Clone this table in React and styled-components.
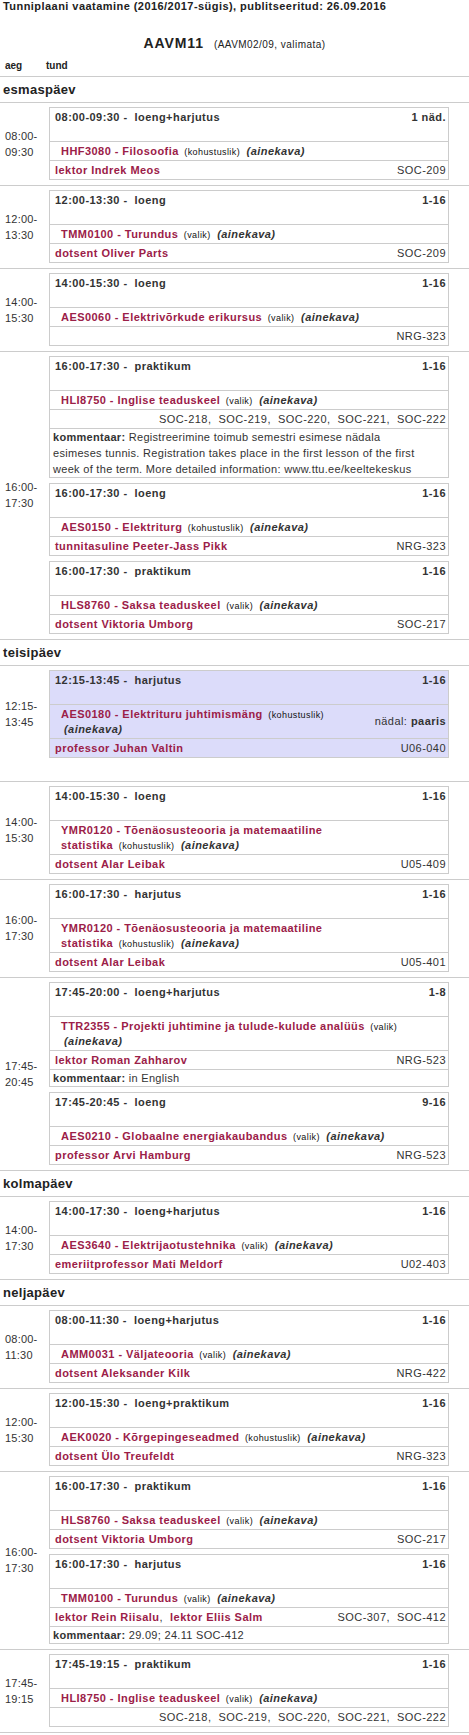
import React from "react";
import styled, { createGlobalStyle } from "styled-components";

const GlobalStyle = createGlobalStyle`
  * { box-sizing: border-box; }
  body {
    margin: 0;
    background: #ffffff;
    color: #222222;
    font-family: "Liberation Sans", Arial, Helvetica, sans-serif;
  }
`;

const LINE = "#cccccc";
const RED = "#9b2048";

const Page = styled.div`
  width: 469px;
  font-size: 11px;
  letter-spacing: 0.45px;
`;

const Title = styled.div`
  padding-left: 3px;
  font-weight: bold;
  line-height: 13px;
  color: #222;
`;

const Group = styled.div`
  margin-top: 22px;
  text-align: center;
  line-height: 17px;
`;

const GroupName = styled.span`
  font-size: 14px;
  font-weight: bold;
  letter-spacing: 0.9px;
  color: #222;
`;

const GroupNote = styled.span`
  margin-left: 10px;
  font-size: 10px;
  color: #222;
`;

const Heads = styled.div`
  display: flex;
  margin-top: 7px;
  padding-bottom: 4px;
  font-size: 10px;
  font-weight: bold;
  line-height: 12px;
  letter-spacing: 0;
`;

const Head = styled.span`
  width: ${(p) => p.$w}px;
  padding-left: 5px;
`;

const DayTitle = styled.div`
  border-top: 1px solid ${LINE};
  height: 26px;
  padding-left: 3px;
  font-size: 13px;
  font-weight: bold;
  letter-spacing: 0.3px;
  line-height: 25px;
  color: #222;
`;

const Slot = styled.div`
  display: grid;
  grid-template-columns: 49px 400px;
  border-top: 1px solid ${LINE};
  padding: 4px 0 ${(p) => p.$tail}px;
  &:last-child {
    border-bottom: 1px solid ${LINE};
  }
`;

const Time = styled.div`
  align-self: center;
  padding-left: 5px;
  line-height: 16px;
  letter-spacing: 0.2px;
  color: #333;
`;

const Boxes = styled.div`
  display: flex;
  flex-direction: column;
  gap: 5px;
`;

const Box = styled.div`
  border: 1px solid ${LINE};
  background: ${(p) => (p.$hl ? "#dcdcfa" : "#ffffff")};
`;

const Row = styled.div`
  display: flex;
  justify-content: space-between;
  align-items: center;
  gap: 6px;
  padding: 1.5px 2px 1.5px ${(p) => p.$indent || 5}px;
  line-height: 15px;
  border-top: 1px solid ${LINE};
  &:first-child {
    border-top: 0;
  }
`;

const HeadRow = styled(Row)`
  align-items: flex-start;
  min-height: 33px;
  font-weight: bold;
  color: #333;
  white-space: pre;
`;

const Red = styled.span`
  color: ${RED};
  font-weight: bold;
`;

const Kind = styled.span`
  margin-left: 2px;
  font-size: 9px;
  line-height: 1;
  letter-spacing: 0.4px;
  color: #111;
`;

const Plan = styled.span`
  margin-left: 3px;
  font-weight: bold;
  font-style: italic;
  color: #333;
`;

const Right = styled.span`
  flex-shrink: 0;
  white-space: nowrap;
  color: #333;
`;

const Bold = styled.b`
  color: #333;
`;

const Sep = styled.span`
  color: #333;
`;

const Comment = styled.div`
  border-top: 1px solid ${LINE};
  padding: 0 2px 0 3px;
  line-height: 16px;
  letter-spacing: 0.3px;
  white-space: nowrap;
  color: #333;
`;

const HLI = {
  time: "16:00-17:30",
  type: "praktikum",
  weeks: "1-16",
  code: ["HLI8750 - Inglise teaduskeel"],
  kind: "valik",
  teachers: [],
  rooms: ["SOC-218", "SOC-219", "SOC-220", "SOC-221", "SOC-222"],
};

const HLS = {
  time: "16:00-17:30",
  type: "praktikum",
  weeks: "1-16",
  code: ["HLS8760 - Saksa teaduskeel"],
  kind: "valik",
  teachers: ["dotsent Viktoria Umborg"],
  rooms: ["SOC-217"],
};

const YMR = ["YMR0120 - Tõenäosusteooria ja matemaatiline", "statistika"];

const days = [
  {
    name: "esmaspäev",
    slots: [
      {
        from: "08:00",
        to: "09:30",
        items: [
          {
            time: "08:00-09:30",
            type: "loeng+harjutus",
            weeks: "1 näd.",
            code: ["HHF3080 - Filosoofia"],
            kind: "kohustuslik",
            teachers: ["lektor Indrek Meos"],
            rooms: ["SOC-209"],
          },
        ],
      },
      {
        from: "12:00",
        to: "13:30",
        items: [
          {
            time: "12:00-13:30",
            type: "loeng",
            weeks: "1-16",
            code: ["TMM0100 - Turundus"],
            kind: "valik",
            teachers: ["dotsent Oliver Parts"],
            rooms: ["SOC-209"],
          },
        ],
      },
      {
        from: "14:00",
        to: "15:30",
        items: [
          {
            time: "14:00-15:30",
            type: "loeng",
            weeks: "1-16",
            code: ["AES0060 - Elektrivõrkude erikursus"],
            kind: "valik",
            teachers: [],
            rooms: ["NRG-323"],
          },
        ],
      },
      {
        from: "16:00",
        to: "17:30",
        items: [
          {
            ...HLI,
            comment: [
              "Registreerimine toimub semestri esimese nädala",
              "esimeses tunnis. Registration takes place in the first lesson of the first",
              "week of the term. More detailed information: www.ttu.ee/keeltekeskus",
            ],
          },
          {
            time: "16:00-17:30",
            type: "loeng",
            weeks: "1-16",
            code: ["AES0150 - Elektriturg"],
            kind: "kohustuslik",
            teachers: ["tunnitasuline Peeter-Jass Pikk"],
            rooms: ["NRG-323"],
          },
          HLS,
        ],
      },
    ],
  },
  {
    name: "teisipäev",
    slots: [
      {
        from: "12:15",
        to: "13:45",
        tail: 23,
        items: [
          {
            time: "12:15-13:45",
            type: "harjutus",
            weeks: "1-16",
            code: ["AES0180 - Elektrituru juhtimismäng"],
            kind: "kohustuslik",
            planBreak: true,
            week: "paaris",
            teachers: ["professor Juhan Valtin"],
            rooms: ["U06-040"],
            hl: true,
          },
        ],
      },
      {
        from: "14:00",
        to: "15:30",
        items: [
          {
            time: "14:00-15:30",
            type: "loeng",
            weeks: "1-16",
            code: YMR,
            kind: "kohustuslik",
            teachers: ["dotsent Alar Leibak"],
            rooms: ["U05-409"],
          },
        ],
      },
      {
        from: "16:00",
        to: "17:30",
        items: [
          {
            time: "16:00-17:30",
            type: "harjutus",
            weeks: "1-16",
            code: YMR,
            kind: "kohustuslik",
            teachers: ["dotsent Alar Leibak"],
            rooms: ["U05-401"],
          },
        ],
      },
      {
        from: "17:45",
        to: "20:45",
        items: [
          {
            time: "17:45-20:00",
            type: "loeng+harjutus",
            weeks: "1-8",
            code: ["TTR2355 - Projekti juhtimine ja tulude-kulude analüüs"],
            kind: "valik",
            planBreak: true,
            teachers: ["lektor Roman Zahharov"],
            rooms: ["NRG-523"],
            comment: ["in English"],
          },
          {
            time: "17:45-20:45",
            type: "loeng",
            weeks: "9-16",
            code: ["AES0210 - Globaalne energiakaubandus"],
            kind: "valik",
            teachers: ["professor Arvi Hamburg"],
            rooms: ["NRG-523"],
          },
        ],
      },
    ],
  },
  {
    name: "kolmapäev",
    slots: [
      {
        from: "14:00",
        to: "17:30",
        items: [
          {
            time: "14:00-17:30",
            type: "loeng+harjutus",
            weeks: "1-16",
            code: ["AES3640 - Elektrijaotustehnika"],
            kind: "valik",
            teachers: ["emeriitprofessor Mati Meldorf"],
            rooms: ["U02-403"],
          },
        ],
      },
    ],
  },
  {
    name: "neljapäev",
    slots: [
      {
        from: "08:00",
        to: "11:30",
        items: [
          {
            time: "08:00-11:30",
            type: "loeng+harjutus",
            weeks: "1-16",
            code: ["AMM0031 - Väljateooria"],
            kind: "valik",
            teachers: ["dotsent Aleksander Kilk"],
            rooms: ["NRG-422"],
          },
        ],
      },
      {
        from: "12:00",
        to: "15:30",
        items: [
          {
            time: "12:00-15:30",
            type: "loeng+praktikum",
            weeks: "1-16",
            code: ["AEK0020 - Kõrgepingeseadmed"],
            kind: "kohustuslik",
            teachers: ["dotsent Ülo Treufeldt"],
            rooms: ["NRG-323"],
          },
        ],
      },
      {
        from: "16:00",
        to: "17:30",
        items: [
          HLS,
          {
            time: "16:00-17:30",
            type: "harjutus",
            weeks: "1-16",
            code: ["TMM0100 - Turundus"],
            kind: "valik",
            teachers: ["lektor Rein Riisalu", "lektor Eliis Salm"],
            rooms: ["SOC-307", "SOC-412"],
            comment: ["29.09; 24.11 SOC-412"],
          },
        ],
      },
      {
        from: "17:45",
        to: "19:15",
        items: [{ ...HLI, time: "17:45-19:15" }],
      },
    ],
  },
];

const Lesson = ({ item }) => (
  <Box $hl={item.hl}>
    <HeadRow>
      <span>{`${item.time} -  ${item.type}`}</span>
      <span>{item.weeks}</span>
    </HeadRow>
    <Row $indent={11}>
      <span>
        {item.code.map((line, i) => (
          <React.Fragment key={i}>
            {i > 0 && <br />}
            <Red>{line}</Red>
          </React.Fragment>
        ))}{" "}
        <Kind>({item.kind})</Kind>
        {item.planBreak ? <br /> : " "}
        <Plan>(ainekava)</Plan>
      </span>
      {item.week && (
        <Right>
          nädal: <Bold>{item.week}</Bold>
        </Right>
      )}
    </Row>
    <Row>
      <span>
        {item.teachers.map((t, i) => (
          <React.Fragment key={t}>
            {i > 0 && <Sep>,{"\u00a0 "}</Sep>}
            <Red>{t}</Red>
          </React.Fragment>
        ))}
      </span>
      <Right>{item.rooms.join(",\u00a0 ")}</Right>
    </Row>
    {item.comment && (
      <Comment>
        <Bold>kommentaar:</Bold>{" "}
        {item.comment.map((line, i) => (
          <React.Fragment key={i}>
            {i > 0 && <br />}
            {line}
          </React.Fragment>
        ))}
      </Comment>
    )}
  </Box>
);

export default function App() {
  return (
    <>
      <GlobalStyle />
      <Page>
        <Title>
          Tunniplaani vaatamine (2016/2017-sügis), publitseeritud: 26.09.2016
        </Title>
        <Group>
          <GroupName>AAVM11</GroupName>
          <GroupNote>(AAVM02/09, valimata)</GroupNote>
        </Group>
        <Heads>
          <Head $w={41}>aeg</Head>
          <Head $w={60}>tund</Head>
        </Heads>
        {days.map((day) => (
          <React.Fragment key={day.name}>
            <DayTitle>{day.name}</DayTitle>
            {day.slots.map((slot, i) => (
              <Slot key={i} $tail={slot.tail || 5}>
                <Time>
                  {slot.from}-
                  <br />
                  {slot.to}
                </Time>
                <Boxes>
                  {slot.items.map((item, j) => (
                    <Lesson key={j} item={item} />
                  ))}
                </Boxes>
              </Slot>
            ))}
          </React.Fragment>
        ))}
      </Page>
    </>
  );
}
